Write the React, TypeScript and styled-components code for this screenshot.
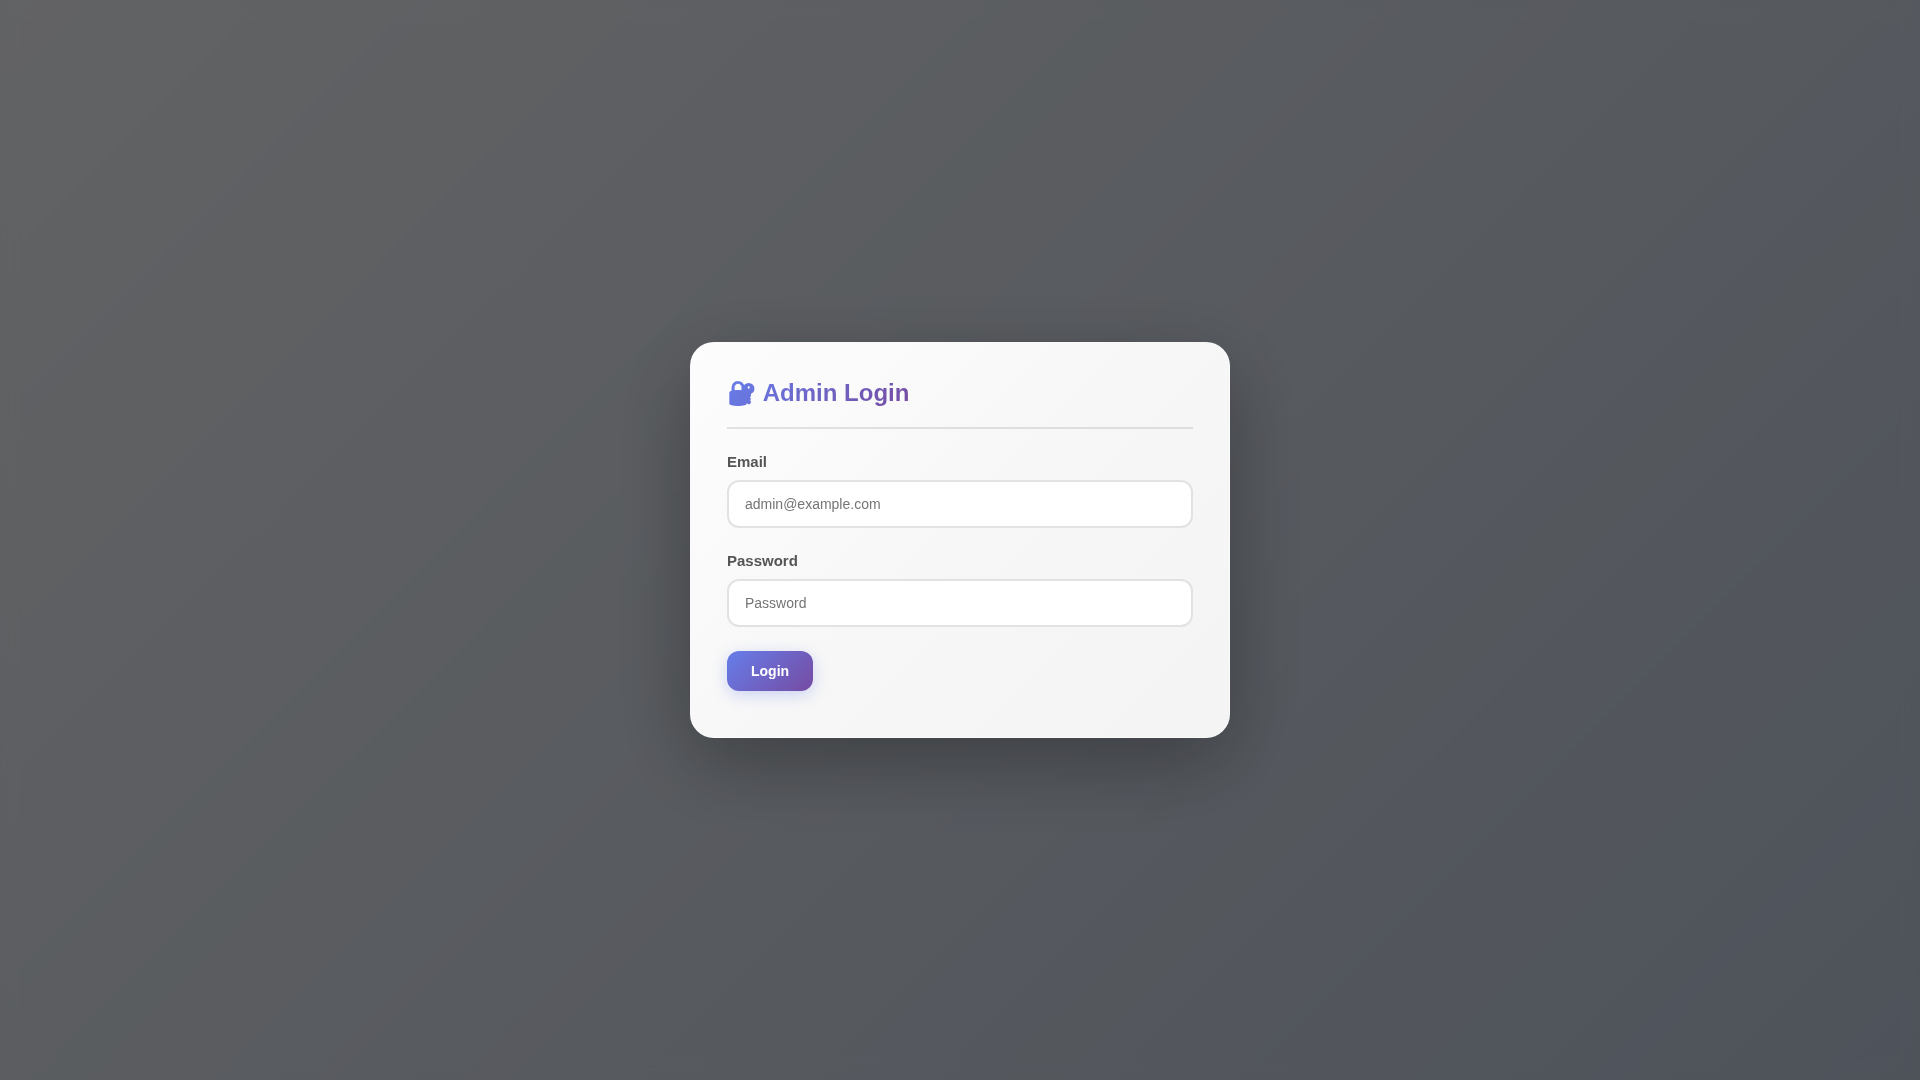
import React from "react";
import styled, { createGlobalStyle } from "styled-components";

const GlobalStyle = createGlobalStyle`
  *, *::before, *::after { box-sizing: border-box; }
  body {
    margin: 0;
    font-family: "Liberation Sans", Arial, sans-serif;
    background: #4e535a;
  }
`;

const Page = styled.main`
  min-height: 100vh;
  display: flex;
  background: linear-gradient(135deg, #f5f7fa 0%, #c3cfe2 100%);
`;

const Overlay = styled.div`
  flex: 1;
  display: flex;
  align-items: center;
  justify-content: center;
  padding: 20px;
  background: rgba(0, 0, 0, 0.6);
  backdrop-filter: blur(8px);
`;

const Card = styled.section`
  width: 100%;
  max-width: 540px;
  padding: 36px;
  border: 1px solid rgba(255, 255, 255, 0.3);
  border-radius: 24px;
  background: linear-gradient(135deg, #fdfdfd 0%, #f7f7f7 50%, #f4f4f4 100%);
  box-shadow: 0 25px 80px rgba(0, 0, 0, 0.3);
`;

const CardHeader = styled.header`
  display: flex;
  margin-bottom: 24px;
  padding-bottom: 20px;
  border-bottom: 2px solid rgba(0, 0, 0, 0.1);
`;

const Title = styled.h1`
  margin: 0;
  font-size: 24px;
  line-height: 28px;
  font-weight: 700;
  background: linear-gradient(135deg, #667eea 0%, #764ba2 100%);
  background-clip: text;
  -webkit-background-clip: text;
  -webkit-text-fill-color: transparent;
`;

const Form = styled.form`
  display: flex;
  flex-direction: column;
  align-items: flex-start;
  gap: 24px;
  padding-bottom: 10px;
`;

const Field = styled.div`
  width: 100%;
  display: flex;
  flex-direction: column;
  gap: 10px;
`;

const Label = styled.label`
  font-size: 15px;
  line-height: 17px;
  font-weight: 600;
  color: #555;
`;

const Input = styled.input`
  width: 100%;
  height: 48px;
  padding: 0 16px;
  border: 2px solid #e2e2e2;
  border-radius: 12px;
  background: #fff;
  color: #333;
  font-family: inherit;
  font-size: 14px;
  outline: none;

  &::placeholder { color: #757575; }
  &:focus { border-color: #667eea; }
`;

const Button = styled.button`
  padding: 12px 24px;
  border: 0;
  border-radius: 12px;
  background: linear-gradient(135deg, #667eea 0%, #764ba2 100%);
  box-shadow: 0 4px 15px rgba(102, 126, 234, 0.3);
  color: #fff;
  font-family: inherit;
  font-size: 14px;
  line-height: 16px;
  font-weight: 600;
  cursor: pointer;
`;

export default function App() {
  return (
    <>
      <GlobalStyle />
      <Page>
        <Overlay>
          <Card>
            <CardHeader>
              <Title>🔐 Admin Login</Title>
            </CardHeader>
            <Form onSubmit={(event: React.FormEvent) => event.preventDefault()}>
              <Field>
                <Label htmlFor="email">Email</Label>
                <Input id="email" type="email" placeholder="admin@example.com" />
              </Field>
              <Field>
                <Label htmlFor="password">Password</Label>
                <Input id="password" type="password" placeholder="Password" />
              </Field>
              <Button type="submit">Login</Button>
            </Form>
          </Card>
        </Overlay>
      </Page>
    </>
  );
}
